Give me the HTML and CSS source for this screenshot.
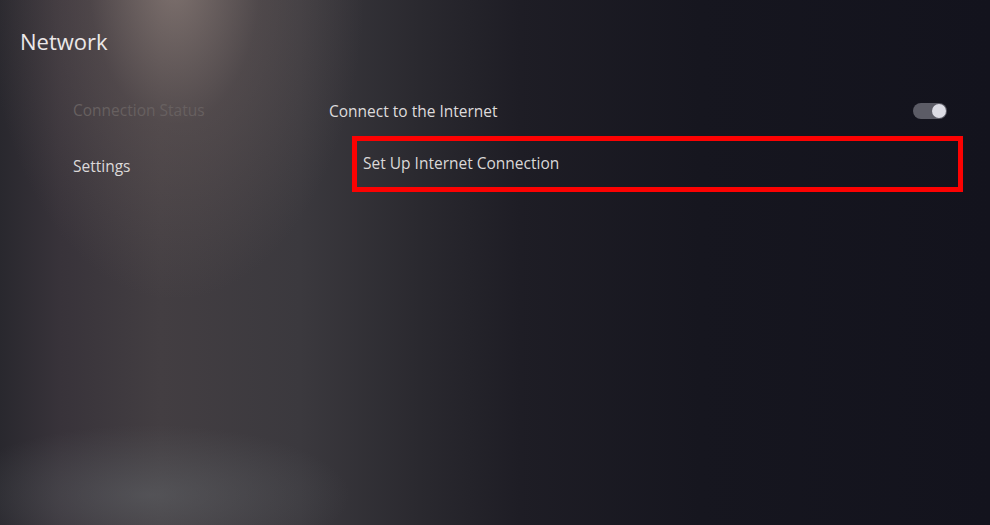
FILE: index.html
```html
<!DOCTYPE html>
<html lang="en">
<head>
<meta charset="utf-8">
<title>Network</title>
<link rel="stylesheet" href="styles.css">
</head>
<body>
<div class="screen">
  <h1 class="title">Network</h1>
  <div class="layout">
    <nav class="nav">
      <div class="nav-item dim">Connection Status</div>
      <div class="nav-item">Settings</div>
    </nav>
    <section class="content">
      <div class="row">
        <span>Connect to the Internet</span>
        <span class="toggle"><span class="knob"></span></span>
      </div>
      <div class="row-focus">
        <span>Set Up Internet Connection</span>
      </div>
    </section>
  </div>
</div>
</body>
</html>
```

FILE: styles.css
```css
html, body {
  margin: 0;
  padding: 0;
  width: 990px;
  height: 525px;
  overflow: hidden;
}
body {
  font-family: "Open Sans", "Noto Sans", sans-serif;
  color: #e4e1e1;
  background:
    radial-gradient(ellipse 200px 70px at 150px 495px, rgba(100,104,108,0.5), rgba(100,104,108,0) 100%),
    radial-gradient(ellipse 190px 320px at 175px -20px, rgba(150,134,128,0.7), rgba(120,105,102,0.3) 45%, rgba(90,80,80,0) 100%),
    linear-gradient(to right, #29282e 0px, #38333a 60px, #433e42 160px, #3b393e 300px, #2a292f 420px, #1e1d25 520px, #16161f 700px, #13131d 990px);
}
.screen {
  height: 525px;
  display: flex;
  flex-direction: column;
}
.title {
  margin: 0;
  padding: 26px 0 0 20px;
  height: 84px;
  box-sizing: border-box;
  font-weight: 400;
  font-size: 22px;
  line-height: 30px;
  color: #ece8e8;
}
.layout {
  display: flex;
  padding-left: 73px;
}
.nav {
  width: 256px;
  margin-top: -2px;
  display: flex;
  flex-direction: column;
}
.nav-item {
  height: 56px;
  display: flex;
  align-items: center;
  font-size: 15.5px;
  color: #dcd9d9;
}
.nav-item.dim {
  color: #676060;
}
.content {
  width: 634px;
  display: flex;
  flex-direction: column;
}
.row {
  height: 52px;
  display: flex;
  align-items: center;
  justify-content: space-between;
  padding-right: 16px;
  padding-top: 2px;
  box-sizing: border-box;
  font-size: 15.5px;
  color: #dedbdc;
}
.toggle {
  width: 34px;
  height: 16px;
  border-radius: 8px;
  background: #5c5c66;
  display: flex;
  align-items: center;
  justify-content: flex-end;
  padding: 0 1px;
  box-sizing: border-box;
}
.knob {
  width: 14px;
  height: 14px;
  border-radius: 50%;
  background: #dcdce4;
}
.row-focus {
  margin-left: 23px;
  height: 56px;
  border: 5px solid #fc0202;
  box-sizing: border-box;
  display: flex;
  align-items: center;
  padding-left: 6px;
  padding-bottom: 2px;
  font-size: 15.5px;
  color: #dad8d8;
}
```
